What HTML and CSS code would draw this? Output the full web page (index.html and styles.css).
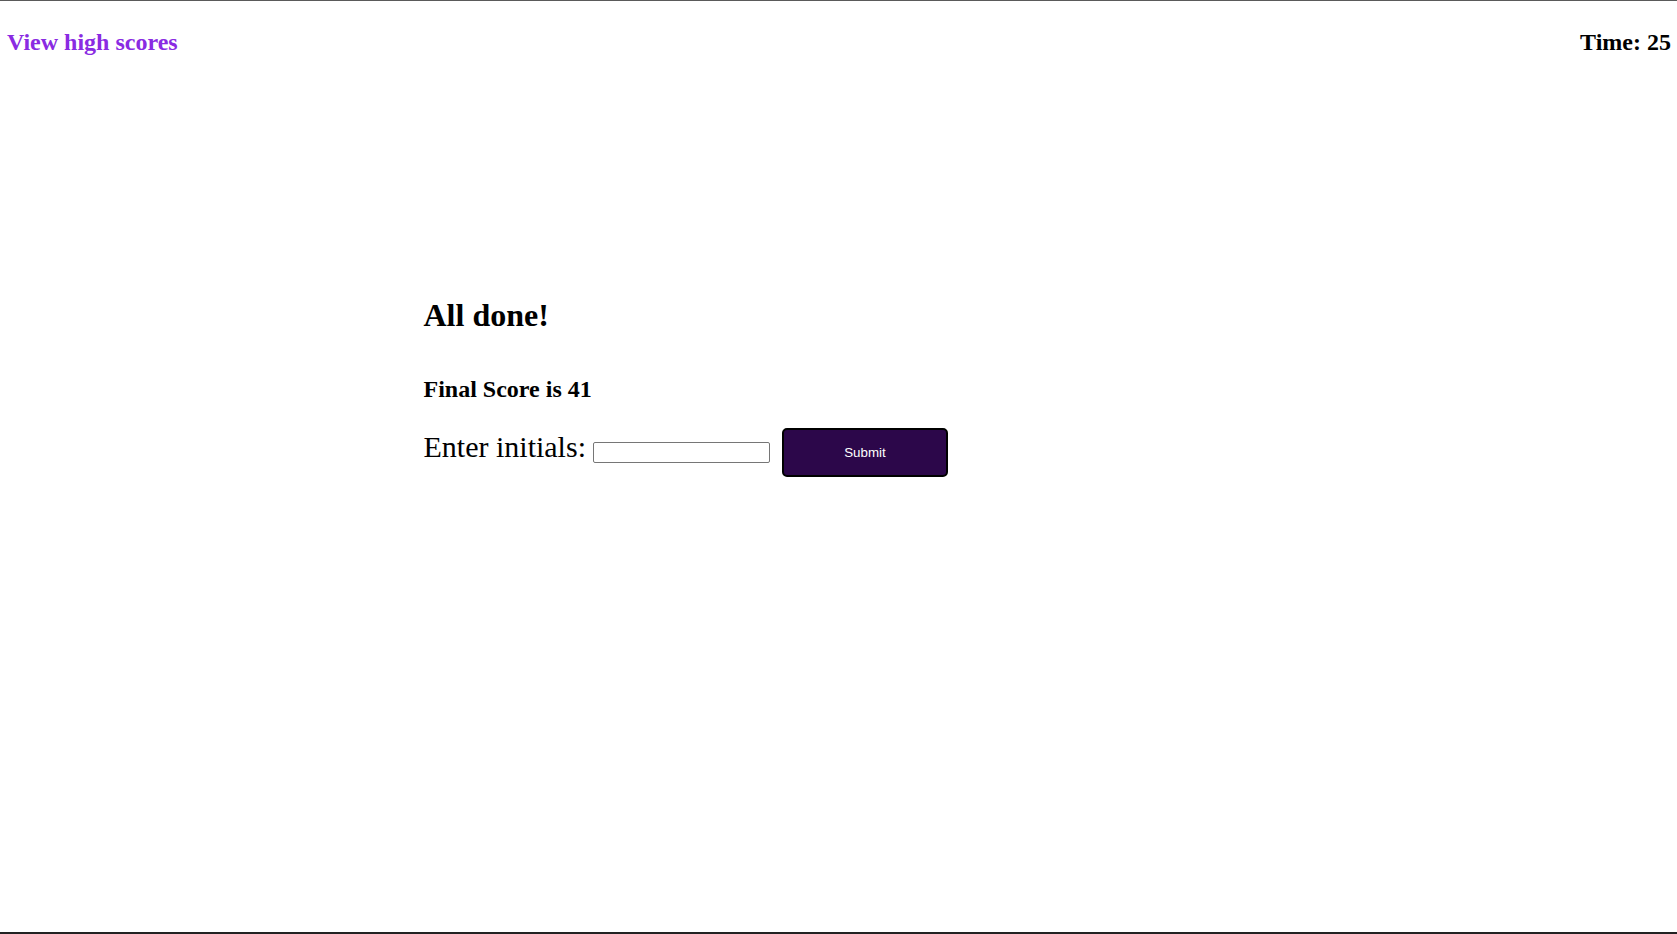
FILE: index.html
```html
<!DOCTYPE html>
<html lang="en">
<head>
<meta charset="utf-8">
<title>Code Quiz</title>
<link rel="stylesheet" href="styles.css">
</head>
<body>
<div class="frame">
  <header class="topbar">
    <a class="scores-link" href="#">View high scores</a>
    <div class="timer">Time: 25</div>
  </header>
  <main class="quiz">
    <h1 class="done-title">All done!</h1>
    <h2 class="final-score">Final Score is 41</h2>
    <form class="initials-row">
      <label class="initials-label" for="initials">Enter initials:</label>
      <input class="initials-input" id="initials" type="text">
      <button class="submit-btn" type="button">Submit</button>
    </form>
  </main>
</div>
</body>
</html>
```
FILE: styles.css
```css
html, body {
  margin: 0;
  padding: 0;
  background: #ffffff;
}

body {
  font-family: "Liberation Serif", "Times New Roman", serif;
  color: #000000;
}

.frame {
  min-height: 100vh;
  box-sizing: border-box;
  border-top: 1px solid #5a5a5a;
  border-bottom: 2px solid #222222;
}

.topbar {
  display: flex;
  justify-content: space-between;
  align-items: baseline;
  margin-top: 28px;
  padding: 0 6px 0 7px;
  font-size: 24px;
  font-weight: bold;
  line-height: normal;
}

.scores-link {
  color: #8a2be2;
  text-decoration: none;
}

.timer {
  color: #000000;
}

.quiz {
  width: 830px;
  margin: 241px auto 0;
}

.done-title {
  margin: 0;
  font-size: 32px;
  font-weight: bold;
  line-height: normal;
}

.final-score {
  margin: 42px 0 0;
  font-size: 24px;
  font-weight: bold;
  line-height: normal;
}

.initials-row {
  display: flex;
  align-items: baseline;
  margin: 25px 0 0;
}

.initials-label {
  font-size: 30px;
  line-height: normal;
  margin-right: 7px;
}

.initials-input {
  box-sizing: border-box;
  width: 177px;
  height: 21px;
  border: 1px solid #767676;
  border-radius: 2px;
  padding: 1px 2px;
  font-family: "Liberation Sans", Arial, sans-serif;
  font-size: 13.33px;
  background: #ffffff;
}

.submit-btn {
  box-sizing: border-box;
  width: 166px;
  height: 49px;
  margin-left: 12px;
  border: 2px solid #000000;
  border-radius: 5px;
  background: #2c074a;
  color: #ffffff;
  font-family: "Liberation Sans", Arial, sans-serif;
  font-size: 13.33px;
  cursor: pointer;
}
```
